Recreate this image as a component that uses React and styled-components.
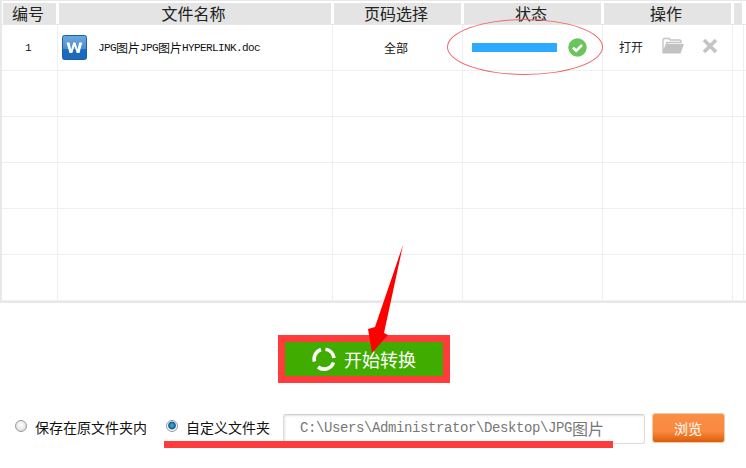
import React from "react";
import styled, { createGlobalStyle } from "styled-components";

const Global = createGlobalStyle`
  html, body { margin: 0; padding: 0; background: #fff; }
  body { font-family: "Noto Sans CJK SC", sans-serif; }
  #root { width: 746px; height: 468px; overflow: hidden; }
`;
const Page = styled.div`
  position: relative; width: 746px; height: 468px; background: #fff;
  display: flex; flex-direction: column;
`;
const Table = styled.div`
  height: 303px; box-sizing: border-box; overflow: hidden; flex: none;
  border-left: 2px solid #e8e8e8; border-top: 1px solid #e8e8e8; border-bottom: 2px solid #e8e8e8;
  display: flex; flex-direction: column;
`;
const COLS = "56px 275px 130px 140px 130px 11px";
const Head = styled.div`
  display: grid; grid-template-columns: ${COLS}; height: 24px; flex: none;
  padding-top: 2px; border-bottom: 1px solid #e8e8e8; box-sizing: border-box;
`;
const HeadCell = styled.div`
  background: #e4e4e4; margin: 0 2px 0 1px; padding-right: 3px; color: #222; font-size: 16px; line-height: 21px; text-align: center;
  font-family: "Noto Sans CJK SC", sans-serif; white-space: nowrap;
`;
const Row = styled.div`
  display: grid; grid-template-columns: ${COLS}; height: 46px; flex: none; box-sizing: border-box;
  border-bottom: 1px solid #efefef;
`;
const Cell = styled.div`
  border-right: 1px solid #efefef; display: flex; align-items: center;
  justify-content: ${p => p.$center ? "center" : "flex-start"};
  padding-left: ${p => p.$pad || 0}px; padding-right: ${p => p.$center ? 3 : 0}px;
  font-size: 12px; color: #111; box-sizing: border-box;
`;
const Mono = styled.span`
  font-family: "Liberation Mono", monospace; font-size: 11px; letter-spacing: -.6px;
`;
const FileName = styled.span` margin-left: 11px; display: flex; align-items: center; font-size: 12px; line-height: 14px; color: #111; `;
const Bar = styled.div` width: 85px; height: 9px; background: #2baaff; margin-right: 11px; `;
const OpenText = styled.span` font-size: 12px; color: #222; margin-right: 19px; margin-top: -2px; `;
const IconGap = styled.span` display: flex; margin-right: ${p => p.$m || 0}px; margin-top: -4px; `;
const Ring = styled.div`
  position: absolute; left: 447px; top: 19px; width: 156px; height: 56px; box-sizing: border-box;
  border: 1px solid #f0676d; border-radius: 50%; pointer-events: none;
`;
const Bottom = styled.div` flex: 1; display: flex; flex-direction: column; align-items: center; `;
const StartButton = styled.button`
  margin-top: 32px; margin-left: -18px; width: 172px; height: 48px; box-sizing: border-box; border: 7px solid #ff3b3b;
  background: #40ac00; color: #fff; font-family: "Noto Sans CJK SC", sans-serif; font-size: 18px;
  display: flex; align-items: center; justify-content: center; gap: 8px; padding: 0;
`;
const OptionRow = styled.div`
  margin-top: 30px; width: 100%; height: 32px; box-sizing: border-box; padding-left: 15px;
  display: flex; align-items: center;
`;
const Radio = styled.span`
  width: 12px; height: 12px; border-radius: 50%; box-sizing: border-box; flex: none;
  border: 1px solid #999; margin-right: 8px; margin-top: -6px;
  background: ${p => p.$on ? "radial-gradient(circle at 50% 45%, #4fb4e8 0, #0d5f94 45%, #fff 60%, #eee 100%)" : "radial-gradient(circle at 50% 40%, #fff 0, #d5d5d5 100%)"};
`;
const OptionText = styled.span`
  font-size: 14px; color: #111; margin-right: ${p => p.$m}px; line-height: 16px; margin-top: -4px;
`;
const PathBox = styled.div`
  width: 362px; height: 30px; box-sizing: border-box; border: 1px solid #dcdcdc; border-top-color: #cfcfcf;
  border-radius: 3px; box-shadow: inset 1px 1px 2px #e4e4e4; padding: 0 0 2px 16px;
  display: flex; align-items: center; color: #777; font-size: 16px; margin-right: 7px; white-space: nowrap;
`;
const PathMono = styled.span` font-family: "Liberation Mono", monospace; font-size: 14px; letter-spacing: -.4px; `;
const Browse = styled.button`
  width: 73px; height: 30px; box-sizing: border-box; border: 1px solid #f6c9a6; border-radius: 3px; padding: 0 1px 0 0;
  margin-top: -3px;
  background: linear-gradient(#f98e45 0, #f98a3f 62%, #dc5c08 100%); color: #fff;
  font-family: "Noto Sans CJK SC", sans-serif; font-size: 14px;
`;
const Underline = styled.div`
  position: absolute; left: 164px; top: 441px; width: 449px; height: 7px; background: #ff3b3b;
`;
const Arrow = styled.svg` position: absolute; left: 360px; top: 240px; pointer-events: none; `;

const WordIcon = () => (
  <svg width="25" height="25" viewBox="0 0 25 25">
    <defs>
      <linearGradient id="w" x1="0" y1="0" x2="0" y2="1">
        <stop offset="0" stopColor="#6ea9dd" /><stop offset=".55" stopColor="#4b8fd2" /><stop offset=".56" stopColor="#1a6cc5" /><stop offset="1" stopColor="#1b68b8" />
      </linearGradient>
    </defs>
    <rect x=".5" y=".5" width="24" height="24" rx="2" fill="url(#w)" stroke="#1c5f9f" />
    <path d="M4.500 7.500h3l1.700 7 2-7h2.300l2 7 1.700-7h3L17.500 18h-2.800l-2.200-7-2.200 7H7.500z" fill="#fff" />
  </svg>
);
const Check = () => (
  <svg width="19" height="19" viewBox="0 0 19 19">
    <circle cx="9.500" cy="9.500" r="9.200" fill="#6cc45c" />
    <path d="M5 9.800l3.200 3L14 7" fill="none" stroke="#fff" strokeWidth="2.600" />
  </svg>
);
const Folder = () => (
  <svg width="22" height="17" viewBox="0 0 22 17">
    <path d="M1 16V3l1-1.500h5L8.500 3H18l1 1v1.500H5L1 16z" fill="none" stroke="#c4c4c4" strokeWidth="1.400" />
    <path d="M1 16.500L4.800 7H22l-3.500 9.500z" fill="#c2c2c2" />
  </svg>
);
const Close = () => (
  <svg width="16" height="16" viewBox="0 0 16 16">
    <path d="M2 2l12 12M14 2L2 14" stroke="#c4c4c4" strokeWidth="3.600" />
  </svg>
);
const Spin = () => (
  <svg width="24" height="24" viewBox="0 0 24 24">
    <g fill="none" stroke="#fff" strokeWidth="3.600">
      <path d="M2.500 14.500A10 10 0 0 1 9 2.500" />
      <path d="M13.500 2.200A10 10 0 0 1 22 11" />
      <path d="M21.500 15.500A10 10 0 0 1 6 20" />
    </g>
  </svg>
);

const headers = ["编号", "文件名称", "页码选择", "状态", "操作", ""];
const cols = [0, 1, 2, 3, 4, 5];

export default function App() {
  return (
    <Page>
      <Global />
      <Table>
        <Head>{headers.map((h, i) => <HeadCell key={i}>{h}</HeadCell>)}</Head>
        <Row>
          <Cell $center><Mono>1</Mono></Cell>
          <Cell $pad={4}>
            <WordIcon />
            <FileName><Mono>JPG</Mono>图片<Mono>JPG</Mono>图片<Mono>HYPERLINK.doc</Mono></FileName>
          </Cell>
          <Cell $center>全部</Cell>
          <Cell $pad={9}><Bar /><Check /></Cell>
          <Cell $pad={16}>
            <OpenText>打开</OpenText>
            <IconGap $m={18}><Folder /></IconGap>
            <IconGap><Close /></IconGap>
          </Cell>
          <Cell />
        </Row>
        {[1, 2, 3, 4, 5].map(r => (
          <Row key={r}>{cols.map(c => <Cell key={c} />)}</Row>
        ))}
      </Table>
      <Ring />
      <Bottom>
        <StartButton><Spin />开始转换</StartButton>
        <OptionRow>
          <Radio />
          <OptionText $m={19}>保存在原文件夹内</OptionText>
          <Radio $on />
          <OptionText $m={13}>自定义文件夹</OptionText>
          <PathBox><PathMono>C:\Users\Administrator\Desktop\JPG</PathMono>图片</PathBox>
          <Browse>浏览</Browse>
        </OptionRow>
      </Bottom>
      <Underline />
      <Arrow width="50" height="120" viewBox="0 0 50 120">
        <path d="M43 5L15 87l-7 2 4 24 16-18-4-2z" fill="#ff0000" />
      </Arrow>
    </Page>
  );
}
